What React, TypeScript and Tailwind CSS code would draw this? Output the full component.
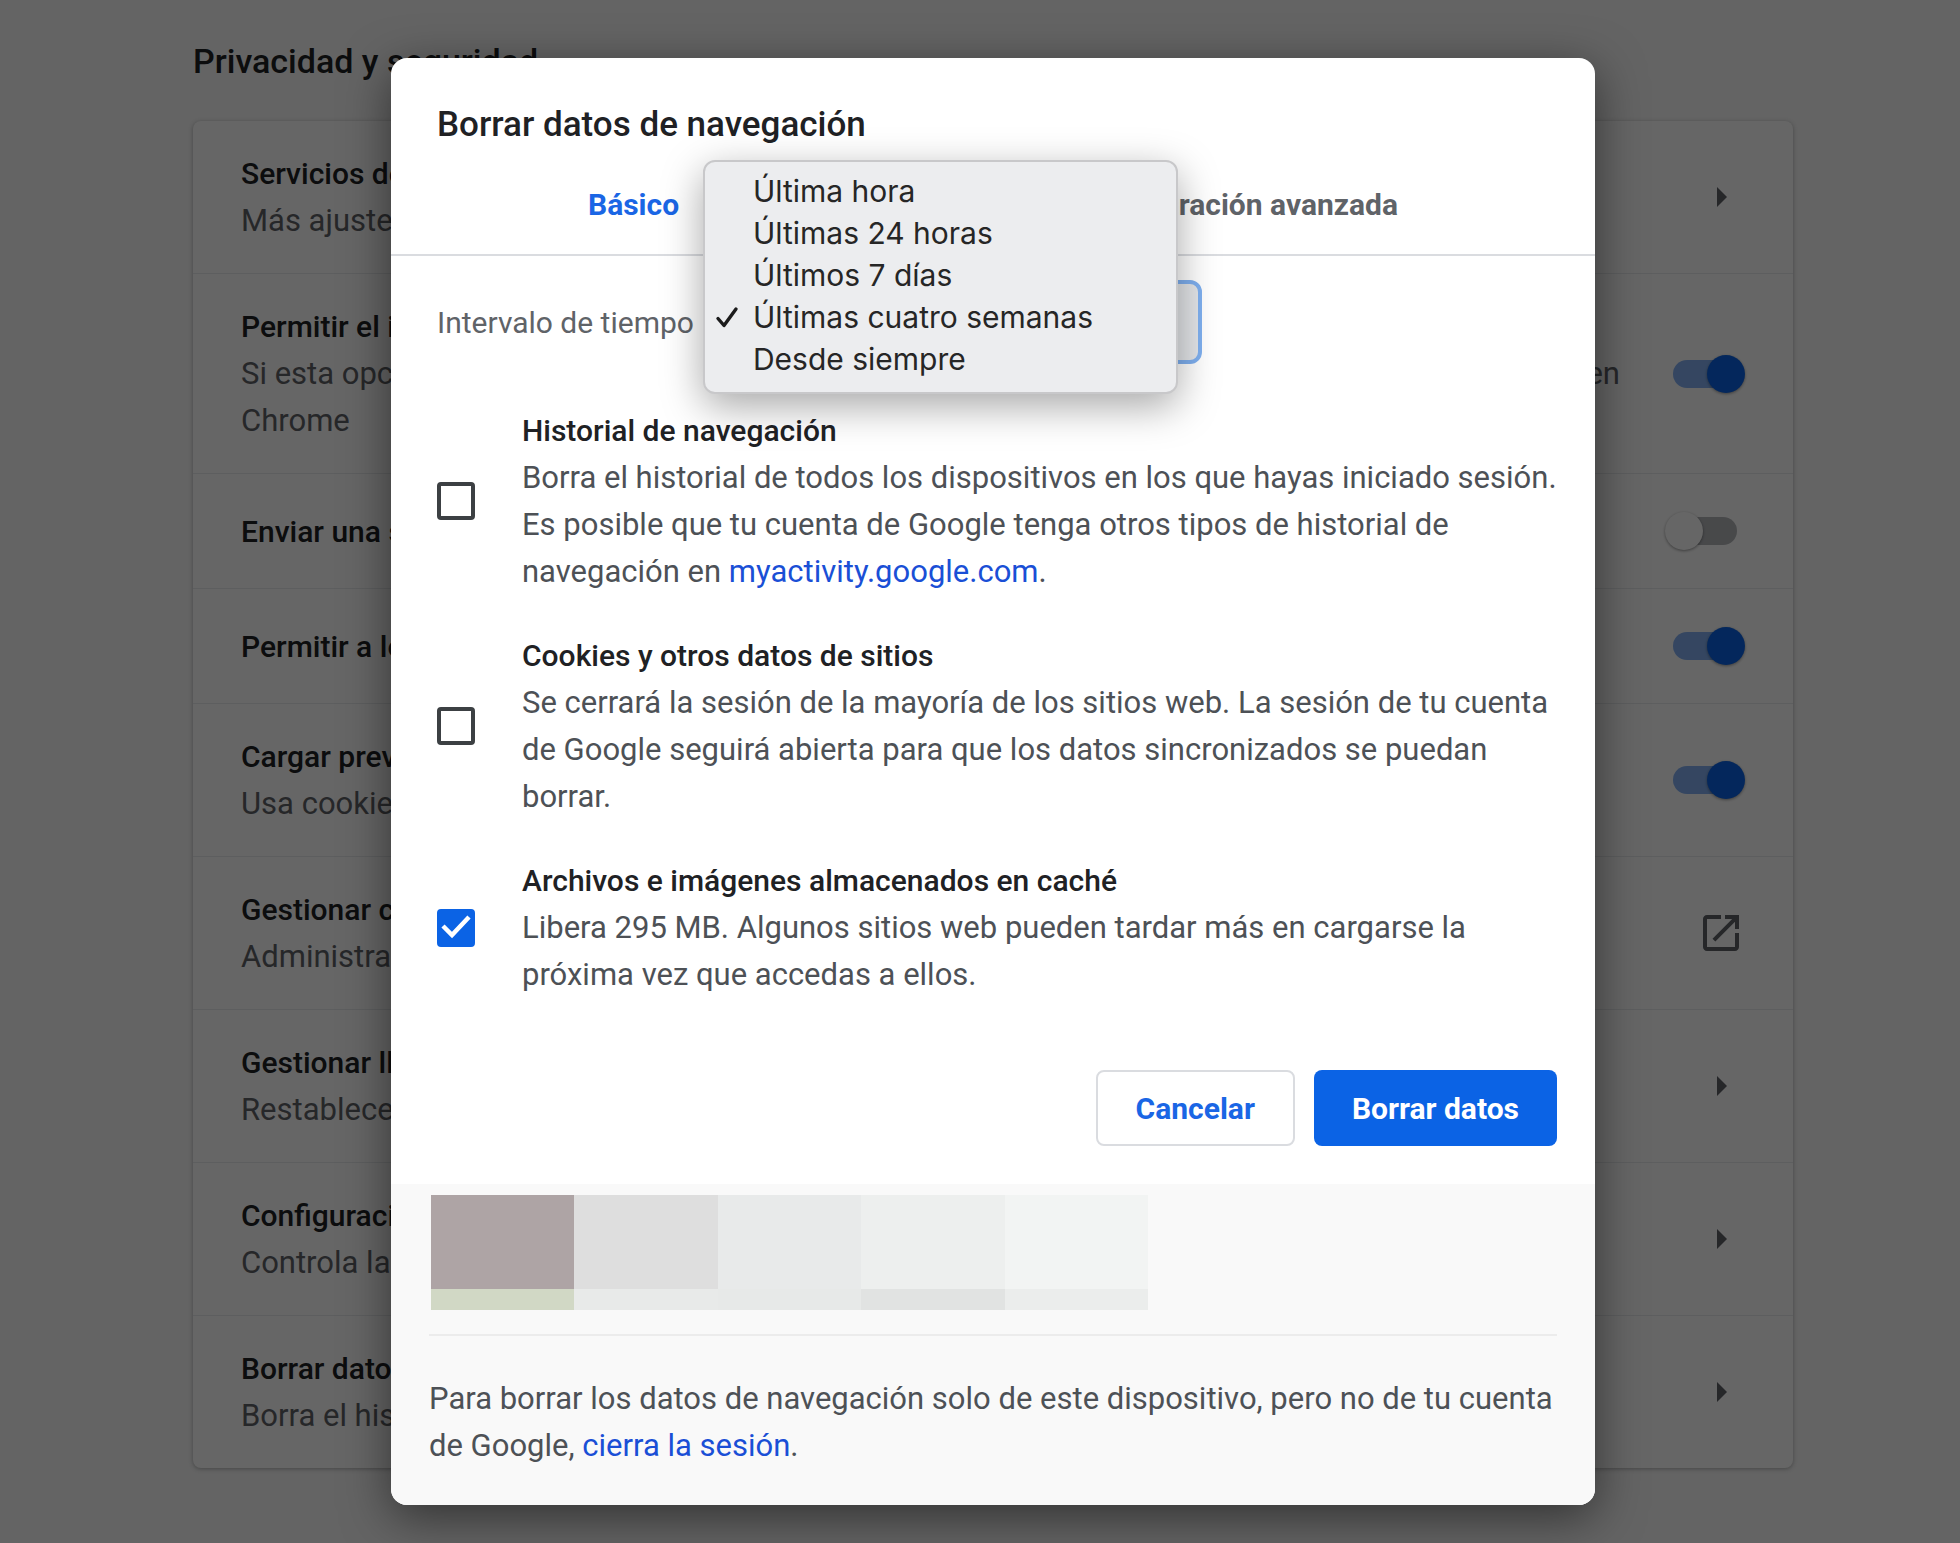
import React, { useState } from 'react';

type Control = 'arrow' | 'external' | 'switch';

interface Setting {
  id: string;
  title: string;
  description?: string;
  control: Control;
}

const settings: Setting[] = [
  {
    id: 'sync',
    title: 'Servicios de Google y sincronización',
    description: 'Más ajustes relacionados con la privacidad, la seguridad y la recopilación de datos',
    control: 'arrow',
  },
  {
    id: 'signin',
    title: 'Permitir el inicio de sesión en Chrome',
    description:
      'Si esta opción está desactivada puedes iniciar sesión en sitios de Google como Gmail sin hacerlo en Chrome',
    control: 'switch',
  },
  {
    id: 'dnt',
    title: 'Enviar una solicitud de no seguimiento con tu tráfico de navegación',
    control: 'switch',
  },
  {
    id: 'payments',
    title: 'Permitir a los sitios saber si tienes métodos de pago guardados',
    control: 'switch',
  },
  {
    id: 'preload',
    title: 'Cargar previamente las páginas para agilizar la navegación',
    description: 'Usa cookies para recordar tus preferencias, aunque no visites esas páginas',
    control: 'switch',
  },
  {
    id: 'certs',
    title: 'Gestionar certificados',
    description: 'Administra la configuración y los certificados HTTPS/SSL',
    control: 'external',
  },
  {
    id: 'keys',
    title: 'Gestionar llaves de seguridad',
    description: 'Restablece las llaves de seguridad y crea PINs',
    control: 'arrow',
  },
  {
    id: 'sites',
    title: 'Configuración de sitios',
    description: 'Controla la información que pueden usar los sitios web',
    control: 'arrow',
  },
  {
    id: 'clear',
    title: 'Borrar datos de navegación',
    description: 'Borra el historial, las cookies, la caché y más',
    control: 'arrow',
  },
];

const ranges = [
  'Última hora',
  'Últimas 24 horas',
  'Últimos 7 días',
  'Últimas cuatro semanas',
  'Desde siempre',
];

const dataTypes = [
  {
    id: 'history',
    title: 'Historial de navegación',
    description: (
      <>
        Borra el historial de todos los dispositivos en los que hayas iniciado sesión. Es posible que
        tu cuenta de Google tenga otros tipos de historial de navegación en{' '}
        <a href="#myactivity" className="text-[#1a4fd6]">myactivity.google.com</a>.
      </>
    ),
  },
  {
    id: 'cookies',
    title: 'Cookies y otros datos de sitios',
    description:
      'Se cerrará la sesión de la mayoría de los sitios web. La sesión de tu cuenta de Google seguirá abierta para que los datos sincronizados se puedan borrar.',
  },
  {
    id: 'cache',
    title: 'Archivos e imágenes almacenados en caché',
    description:
      'Libera 295 MB. Algunos sitios web pueden tardar más en cargarse la próxima vez que accedas a ellos.',
  },
];

const ArrowIcon = () => (
  <svg viewBox="0 0 24 24" className="h-12 w-12" fill="#5f6368">
    <path d="M10 7l5 5-5 5z" />
  </svg>
);

const ExternalIcon = () => (
  <svg viewBox="0 0 24 24" className="h-12 w-12" fill="#5f6368">
    <path d="M19 19H5V5h7V3H5c-1.11 0-2 .9-2 2v14c0 1.1.89 2 2 2h14c1.1 0 2-.9 2-2v-7h-2v7zM14 3v2h3.59l-9.83 9.83 1.41 1.41L19 6.41V10h2V3h-7z" />
  </svg>
);

const App: React.FC = () => {
  const [enabled, setEnabled] = useState<Record<string, boolean>>({
    signin: true,
    payments: true,
    preload: true,
  });
  const [checked, setChecked] = useState<Record<string, boolean>>({ cache: true });
  const [range, setRange] = useState('Últimas cuatro semanas');

  return (
    <div className="relative min-h-screen overflow-hidden bg-[#f9f9f9] pl-[26px] font-['Roboto',sans-serif] text-[31px] leading-[47px] text-[#202124]">
      <main className="mx-auto max-w-[1600px] pt-[38px] pb-[76px]">
        <h1 className="mb-9 text-[34px] font-medium">Privacidad y seguridad</h1>
        <div className="divide-y divide-[#e8eaed] rounded-lg bg-white shadow-[0_1px_4px_rgba(60,64,67,0.4)]">
          {settings.map(setting => (
            <div key={setting.id} className="flex min-h-[115px] items-center justify-between px-12 py-[29px]">
              <div className="max-w-[1390px]">
                <label htmlFor={setting.id} className="block text-[30px] font-medium">{setting.title}</label>
                {setting.description && <p className="text-[#5f6368]">{setting.description}</p>}
              </div>
              {setting.control === 'switch' ? (
                <input
                  id={setting.id}
                  type="checkbox"
                  role="switch"
                  checked={!!enabled[setting.id]}
                  onChange={() => setEnabled({ ...enabled, [setting.id]: !enabled[setting.id] })}
                  className="relative mr-2 h-7 w-16 shrink-0 appearance-none rounded-full bg-[#b4b6ba] before:absolute before:-top-[5px] before:-left-2 before:size-[38px] before:rounded-full before:bg-white before:shadow-[0_1px_3px_rgba(0,0,0,0.4)] checked:bg-[#84b0f2] checked:before:left-[34px] checked:before:bg-[#0b63e5]"
                />
              ) : (
                <button id={setting.id} type="button" aria-label={setting.title} className="-my-1 shrink-0">
                  {setting.control === 'arrow' ? <ArrowIcon /> : <ExternalIcon />}
                </button>
              )}
            </div>
          ))}
        </div>
      </main>

      <div className="absolute inset-0 bg-black/60 pt-[58px] pl-[26px]">
        <div
          role="dialog"
          aria-labelledby="dialog-title"
          className="mx-auto w-full max-w-[1204px] overflow-hidden rounded-2xl bg-white shadow-[0_12px_48px_rgba(0,0,0,0.5)]"
        >
          <h2 id="dialog-title" className="px-[46px] pt-[43px] text-[35px] font-medium">
            Borrar datos de navegación
          </h2>
          <div role="tablist" className="flex border-b-2 border-[#dadce0] pt-[33px] pb-[26px] text-[30px] font-bold">
            <button role="tab" aria-selected="true" className="flex-auto text-[#1a66e5]">Básico</button>
            <button role="tab" aria-selected="false" className="flex-auto text-[#5f6368]">
              Configuración avanzada
            </button>
          </div>

          <div className="pt-6 pr-[38px] pb-[38px] pl-[46px]">
            <div className="flex items-center gap-6">
              <label htmlFor="range" className="text-[30px] text-[#5f6368]">Intervalo de tiempo</label>
              <div className="relative">
                <select
                  id="range"
                  value={range}
                  onChange={e => setRange(e.target.value)}
                  className="block h-[84px] w-[484px] appearance-none rounded-xl border-4 border-[#7fb0f0] bg-[#e4e6e9] px-5"
                >
                  {ranges.map(item => <option key={item}>{item}</option>)}
                </select>
                <ul
                  role="listbox"
                  aria-label="Intervalo de tiempo"
                  className="absolute right-6 -bottom-[30px] w-[475px] rounded-xl border-2 border-[#c8c8ca] bg-[#ecedef] pt-2 pb-3 font-['Inter',sans-serif] text-[30px] leading-[42px] text-[#262626] shadow-[0_12px_40px_rgba(0,0,0,0.35)]"
                >
                  {ranges.map(item => (
                    <li key={item} role="option" aria-selected={item === range}>
                      <button type="button" onClick={() => setRange(item)} className="flex w-full items-center pl-2.5">
                        <span className="w-[38px]">
                          {item === range && (
                            <svg viewBox="0 0 24 24" className="size-6" fill="none" stroke="#1c1c1c" strokeWidth="3.4" strokeLinecap="round" strokeLinejoin="round">
                              <path d="M3 13.5l6 7L21 4" />
                            </svg>
                          )}
                        </span>
                        {item}
                      </button>
                    </li>
                  ))}
                </ul>
              </div>
            </div>

            <div className="-mr-2 mt-[43px] flex flex-col gap-[37px]">
              {dataTypes.map(type => (
                <div key={type.id} className="flex items-center gap-[47px]">
                  <span className="relative shrink-0">
                    <input
                      id={`type-${type.id}`}
                      type="checkbox"
                      checked={!!checked[type.id]}
                      onChange={() => setChecked({ ...checked, [type.id]: !checked[type.id] })}
                      className="peer block size-[38px] appearance-none rounded border-4 border-[#3c4043] checked:border-[#0b63e5] checked:bg-[#0b63e5]"
                    />
                    <svg viewBox="0 0 38 38" className="pointer-events-none absolute inset-0 hidden peer-checked:block" fill="none" stroke="#fff" strokeWidth="4.5">
                      <path d="M6 17l9 9L32 8" />
                    </svg>
                  </span>
                  <div>
                    <label htmlFor={`type-${type.id}`} className="block text-[30px] font-medium">{type.title}</label>
                    <p className="text-[#4d5156]">{type.description}</p>
                  </div>
                </div>
              ))}
            </div>

            <div className="mt-[72px] flex justify-end gap-[19px] text-[30px] font-bold">
              <button type="button" className="h-[76px] rounded-lg border-2 border-[#dadce0] px-[38px] text-[#1a66e5]">
                Cancelar
              </button>
              <button type="button" className="h-[76px] rounded-lg bg-[#0b63e5] px-[38px] text-white">
                Borrar datos
              </button>
            </div>
          </div>

          <div className="bg-[#f9f9f9] px-[38px] pt-[11px] pb-9">
            <div className="ml-0.5 grid w-[717px] grid-cols-5 grid-rows-[94px_21px]">
              <div className="bg-[#aea4a5]" />
              <div className="bg-[#dedede]" />
              <div className="bg-[#e8eaea]" />
              <div className="bg-[#edefee]" />
              <div className="bg-[#f2f4f3]" />
              <div className="bg-[#d1d8c5]" />
              <div className="bg-[#e8eae9]" />
              <div className="bg-[#e7e9e8]" />
              <div className="bg-[#e1e3e2]" />
              <div className="bg-[#ebedec]" />
            </div>
            <p className="mt-6 border-t-2 border-[#ececec] pt-[39px] text-[#4d5156]">
              Para borrar los datos de navegación solo de este dispositivo, pero no de tu cuenta de Google,{' '}
              <a href="#signout" className="text-[#1a4fd6]">cierra la sesión</a>.
            </p>
          </div>
        </div>
      </div>
    </div>
  );
};

export default App;
